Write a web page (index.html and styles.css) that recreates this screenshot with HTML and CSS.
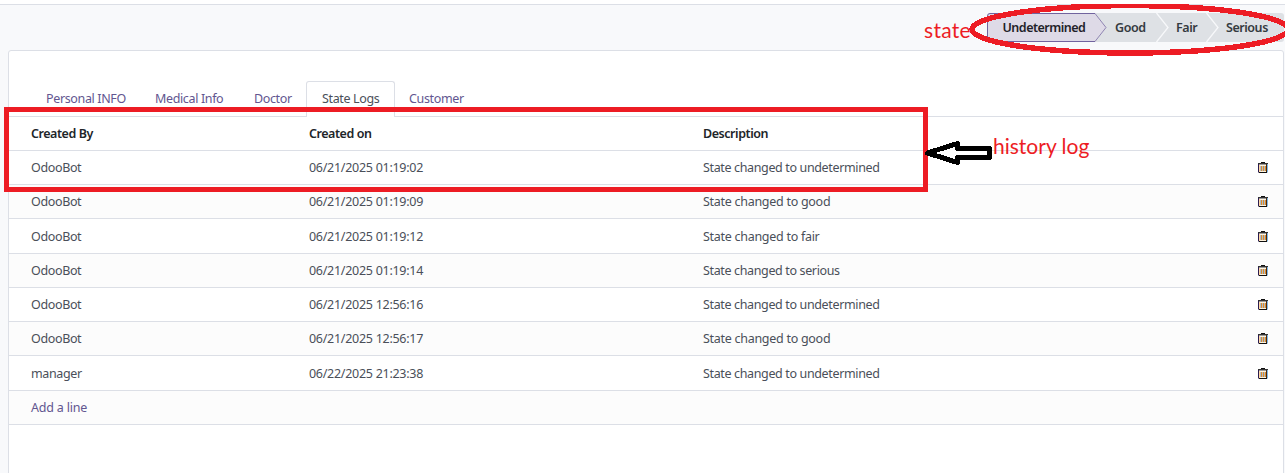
FILE: index.html
```html
<!DOCTYPE html>
<html lang="en">
<head>
<meta charset="utf-8">
<title>State Logs</title>
<link rel="stylesheet" href="styles.css">
</head>
<body>
<svg class="defs" width="0" height="0">
  <symbol id="trash" viewBox="0 0 12 12">
    <path d="M4 .5h4" stroke="#111"/>
    <path d="M1 1.500h10" stroke="#333"/>
    <path d="M2 2.500h8" stroke="#999"/>
    <path d="M2 3h8v7.500h-8z" fill="#fff3dc"/>
    <path d="M1.500 2v8.500" stroke="#2b1c50"/>
    <path d="M2.500 3v7.500" stroke="#ffd9a8"/>
    <path d="M10.500 2v8.500" stroke="#7db8e8"/>
    <path d="M9.500 2v8.500" stroke="#4a2a10"/>
    <path d="M4.500 4v5M6.500 4v5M8.500 4v5" stroke="#e08b2a"/>
    <path d="M3.500 4v5M5.500 4v5M7.500 4v5" stroke="#a9bccb"/>
    <path d="M2 10.500h8" stroke="#111"/>
  </symbol>
</svg>
<header class="statusbar">
  <div class="steps">
    <svg class="step-shapes" width="297" height="29" viewBox="0 0 297 29">
      <rect width="297" height="29" rx="3" fill="#dee1e5"/>
      <path d="M169.500 0l11.500 14.500-11.500 14.500M219.500 0l11.500 14.500-11.500 14.500" fill="none" stroke="#f8f9fb" stroke-width="1.3"/>
      <path d="M3 .5H108l11 14-11 14H3Q.5 28.500 .5 26V3Q.5 .5 3 .5Z" fill="#dedae7"/>
      <path d="M108 .5l11 14-11 14" fill="none" stroke="#8f84b2"/>
      <path d="M108 .5H3Q.5 .5 .5 3V26Q.5 28.500 3 28.500H108" fill="none" stroke="#71639e"/>
    </svg>
    <span class="step step-active">Undetermined</span>
    <span class="step step-good">Good</span>
    <span class="step step-fair">Fair</span>
    <span class="step step-serious">Serious</span>
  </div>
</header>
<main class="sheet">
  <nav class="tabs">
    <a class="tab t-personal">Personal INFO</a>
    <a class="tab t-medical">Medical Info</a>
    <a class="tab t-doctor">Doctor</a>
    <a class="tab t-logs active">State Logs</a>
    <a class="tab t-customer">Customer</a>
  </nav>
  <section class="table">
    <div class="row head"><span>Created By</span><span>Created on</span><span>Description</span></div>
    <div class="row"><span>OdooBot</span><span class="date">06/21/2025 01:19:02</span><span>State changed to undetermined</span><svg class="trash"><use href="#trash"/></svg></div>
    <div class="row alt"><span>OdooBot</span><span class="date">06/21/2025 01:19:09</span><span class="short">State changed to good</span><svg class="trash"><use href="#trash"/></svg></div>
    <div class="row tall"><span>OdooBot</span><span class="date">06/21/2025 01:19:12</span><span class="short">State changed to fair</span><svg class="trash"><use href="#trash"/></svg></div>
    <div class="row alt"><span>OdooBot</span><span class="date">06/21/2025 01:19:14</span><span>State changed to serious</span><svg class="trash"><use href="#trash"/></svg></div>
    <div class="row"><span>OdooBot</span><span class="date">06/21/2025 12:56:16</span><span>State changed to undetermined</span><svg class="trash"><use href="#trash"/></svg></div>
    <div class="row alt"><span>OdooBot</span><span class="date">06/21/2025 12:56:17</span><span class="short">State changed to good</span><svg class="trash"><use href="#trash"/></svg></div>
    <div class="row tall"><span>manager</span><span class="date">06/22/2025 21:23:38</span><span>State changed to undetermined</span><svg class="trash"><use href="#trash"/></svg></div>
    <div class="row alt add"><span>Add a line</span></div>
  </section>
</main>
<svg class="marks" width="1285" height="473" viewBox="0 0 1285 473">
  <rect x="6.500" y="109.500" width="919" height="80" fill="none" stroke="#ed1c24" stroke-width="5"/>
  <ellipse cx="1130" cy="29.300" rx="158" ry="23.700" fill="none" stroke="#ed1c24" stroke-width="5.500" shape-rendering="crispEdges"/>
  <path d="M927.500 153L957.500 143.500V148.500H989.500V157.500H957.500V162.500Z" fill="#fff" stroke="#000" stroke-width="5" stroke-linejoin="round" shape-rendering="crispEdges"/>
</svg>
<span class="note note-state">state</span>
<span class="note note-log">history log</span>
</body>
</html>
```
FILE: styles.css
```css
* { box-sizing: border-box; }
body {
  margin: 0;
  width: 1285px;
  height: 473px;
  overflow: hidden;
  position: relative;
  background: #f8f9fb;
  border-top: 4px solid #fff;
  font-family: "Noto Sans", sans-serif;
  font-size: 12.5px;
  line-height: 18px;
  letter-spacing: -0.36px;
  color: #4a4f59;
  white-space: nowrap;
}
.defs { display: block; position: absolute; }
.statusbar {
  height: 46px;
  border-top: 1px solid #dcdfe6;
  padding: 8px 1px 0 0;
  display: flex;
  justify-content: flex-end;
}
.steps {
  position: relative;
  width: 297px;
  height: 29px;
  display: grid;
  grid-template-columns: 112px 61px 50px 74px;
  align-items: center;
  color: #343a40;
  font-weight: 600;
  letter-spacing: -0.45px;
}
.step-shapes { position: absolute; left: 0; top: 0; }
.step { position: relative; padding-left: 16px; }
.step-active { color: #1f2229; padding-left: 15.5px; letter-spacing: -0.5px; }
.sheet {
  width: 1276px;
  height: 430px;
  margin-left: 8px;
  border: 1px solid #dcdfe6;
  border-radius: 3px 3px 0 0;
  background: #fff;
}
.tabs {
  height: 65px;
  padding: 30px 0 0 22px;
  display: flex;
}
.tab {
  height: 36px;
  padding: 8px 0 0 14px;
  border: 1px solid transparent;
  border-bottom: 0;
  color: #625690;
}
.t-personal { width: 109px; }
.t-medical { width: 99px; }
.t-doctor { width: 67px; }
.t-logs { width: 89px; padding-left: 15px; }
.tab.active {
  border-color: #dcdfe6;
  border-radius: 3px 3px 0 0;
  background: #fff;
  color: #4a4f59;
}
.t-customer { padding-left: 13px; }
.table { border-top: 1px solid #dcdfe6; }
.row {
  height: 34px;
  border-bottom: 1px solid #dcdfe6;
  padding-left: 22px;
  display: grid;
  grid-template-columns: 278px 394px 554px 12px;
  align-items: center;
}
.date { letter-spacing: -0.28px; }
.short { letter-spacing: -0.28px; }
.tall { height: 35px; padding-top: 1px; }
.alt { background: #fcfcfc; }
.head { color: #212529; font-weight: 600; letter-spacing: -0.45px; }
.add { color: #625690; letter-spacing: -0.2px; }
.trash { width: 12px; height: 12px; margin-top: 1px; }
.marks { position: absolute; left: 0; top: -4px; }
.note {
  position: absolute;
  color: #ed1c24;
  font-family: Lato, sans-serif;
  font-size: 21px;
  line-height: 24px;
  letter-spacing: 0;
}
.note-state { left: 924px; top: 14px; letter-spacing: 0.3px; }
.note-log { left: 993px; top: 130px; }
```
